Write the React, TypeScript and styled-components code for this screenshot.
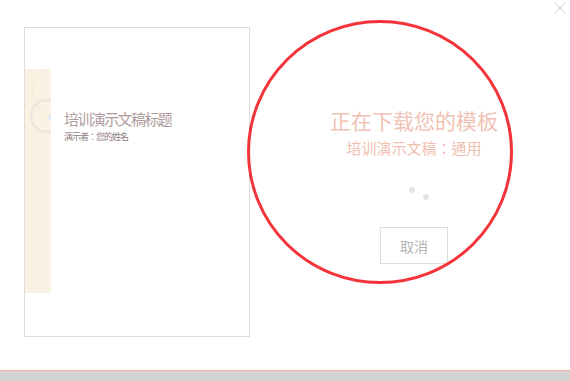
import styled, { createGlobalStyle } from "styled-components";

const GlobalStyle = createGlobalStyle`
  html, body {
    margin: 0;
    padding: 0;
    background: #ffffff;
    font-family: "Noto Sans CJK SC", "Noto Sans", sans-serif;
  }
`;

const Dialog = styled.div`
  position: relative;
  width: 570px;
  height: 381px;
  display: flex;
  flex-direction: column;
  background: #ffffff;
  overflow: hidden;
`;

const Body = styled.div`
  flex: 1;
  display: flex;
  align-items: flex-start;
  padding: 27px 0 0 24px;
`;

const Footer = styled.div`
  height: 10px;
  border-top: 1px solid #f2b3a3;
  background: #d4d4d4;
`;

const CloseButton = styled.button`
  position: absolute;
  top: 2px;
  right: 4px;
  width: 12px;
  height: 12px;
  padding: 0;
  border: 0;
  background: transparent;
  display: flex;
`;

const PreviewCard = styled.div`
  box-sizing: border-box;
  width: 226px;
  height: 310px;
  border: 1px solid #dcdcdc;
  background: #ffffff;
  padding-top: 41px;
`;

const SlideRow = styled.div`
  display: flex;
  align-items: flex-start;
`;

const Strip = styled.div`
  width: 26px;
  height: 224px;
  background: #f9f1e2;
  flex-shrink: 0;
  display: flex;
`;

const SlideText = styled.div`
  margin-left: 13px;
  padding-top: 41px;
  display: flex;
  flex-direction: column;
`;

const SlideTitle = styled.div`
  font-size: 15px;
  line-height: 18px;
  letter-spacing: -1.6px;
  color: #b09c9c;
  white-space: nowrap;
`;

// centered full-width colon, as in the reference rendering
const SlideSubtitle = styled.div`
  margin-top: 3px;
  font-family: "Noto Sans CJK TC", "Noto Sans CJK SC", sans-serif;
  font-size: 9px;
  line-height: 12px;
  letter-spacing: -1px;
  color: #8c7c7c;
  white-space: nowrap;
`;

const Status = styled.div`
  flex: 1;
  margin-left: 8px;
  padding-top: 79px;
  display: flex;
  flex-direction: column;
  align-items: center;
`;

const Heading = styled.div`
  font-size: 21px;
  line-height: 28px;
  color: #f0c2b3;
  white-space: nowrap;
`;

const SubHeading = styled.div`
  margin-top: 4px;
  font-family: "Noto Sans CJK TC", "Noto Sans CJK SC", sans-serif;
  font-size: 15px;
  line-height: 20px;
  color: #efbfaf;
  white-space: nowrap;
`;

const Spinner = styled.div`
  position: relative;
  margin-top: 12px;
  width: 40px;
  height: 40px;
`;

const Dot = styled.span<{ $x: number; $y: number; $shade: string }>`
  position: absolute;
  left: ${(p) => p.$x}px;
  top: ${(p) => p.$y}px;
  width: 6px;
  height: 6px;
  border-radius: 50%;
  background: ${(p) => p.$shade};
`;

const CancelButton = styled.button`
  margin-top: 17px;
  width: 68px;
  height: 37px;
  border: 1px solid #dddddd;
  background: #ffffff;
  font-family: "Noto Sans CJK SC", sans-serif;
  font-size: 14px;
  color: #b2b2b2;
  padding: 0;
`;

const Annotation = styled.svg`
  position: absolute;
  left: 0;
  top: 0;
  pointer-events: none;
`;

export default function App() {
  return (
    <>
      <GlobalStyle />
      <Dialog>
        <Body>
          <PreviewCard>
            <SlideRow>
              <Strip>
                <svg width="26" height="224" viewBox="0 0 26 224">
                  <circle cx="34" cy="22" r="26" fill="none" stroke="#f3e8d4" strokeWidth="1" />
                  <circle cx="22" cy="47" r="16" fill="none" stroke="#eee6dc" strokeWidth="2.5" />
                  <circle cx="26" cy="48" r="3" fill="#dcecf6" />
                </svg>
              </Strip>
              <SlideText>
                <SlideTitle>培训演示文稿标题</SlideTitle>
                <SlideSubtitle>演示者：您的姓名</SlideSubtitle>
              </SlideText>
            </SlideRow>
          </PreviewCard>
          <Status>
            <Heading>正在下载您的模板</Heading>
            <SubHeading>培训演示文稿：通用</SubHeading>
            <Spinner>
              <Dot $x={15} $y={17} $shade="#e6e6e6" />
              <Dot $x={29} $y={24} $shade="#e2e2e2" />
            </Spinner>
            <CancelButton>取消</CancelButton>
          </Status>
        </Body>
        <Footer />
        <CloseButton aria-label="关闭">
          <svg width="12" height="12" viewBox="0 0 12 12">
            <path d="M1 1 L11 11 M11 1 L1 11" stroke="#cfcfcf" strokeWidth="1" />
          </svg>
        </CloseButton>
        <Annotation width="570" height="381" viewBox="0 0 570 381">
          <ellipse cx="380" cy="152" rx="131.5" ry="130.5" fill="none" stroke="#f2333a" strokeWidth="3" />
        </Annotation>
      </Dialog>
    </>
  );
}
